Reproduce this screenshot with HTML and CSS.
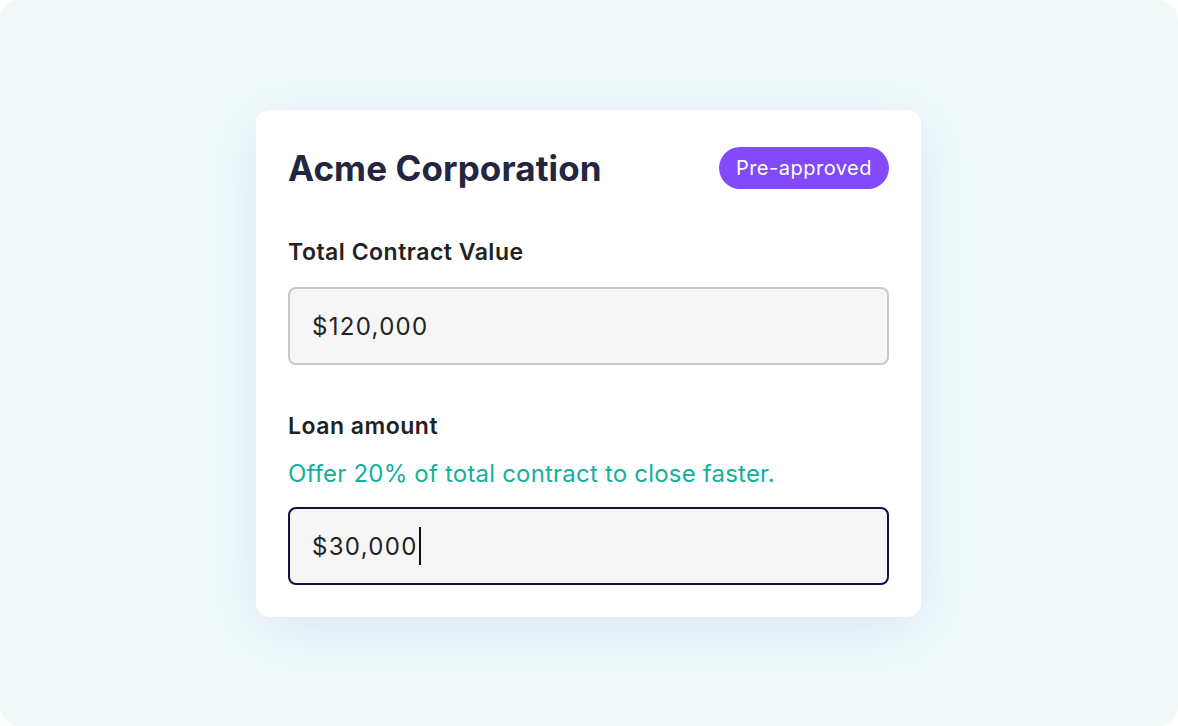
FILE: index.html
```html
<!DOCTYPE html>
<html>
<head>
  <meta charset="UTF-8">
  <title>Loan offer</title>
  <link rel="stylesheet" href="styles.css">
</head>
<body>
  <div class="stage">
    <div class="card">
      <div class="card-header">
        <div class="company">Acme Corporation</div>
        <span class="badge">Pre-approved</span>
      </div>
      <div class="field">
        <label class="field-label">Total Contract Value</label>
        <div class="input">$120,000</div>
      </div>
      <div class="field loan">
        <label class="field-label">Loan amount</label>
        <div class="hint">Offer 20% of total contract to close faster.</div>
        <div class="input focused">$30,000<span class="caret"></span></div>
      </div>
    </div>
  </div>
</body>
</html>
```

FILE: styles.css
```css
body {
  margin: 0;
  background: #fff;
  font-family: Inter, "Noto Sans", sans-serif;
}
.stage {
  width: 1178px;
  height: 726px;
  background: #f1faf9;
  border-radius: 20px;
  display: flex;
  align-items: flex-start;
  padding: 110px 0 0 256px;
  box-sizing: border-box;
}
.card {
  width: 665px;
  box-sizing: border-box;
  background: #fff;
  border-radius: 14px;
  padding: 32px;
  box-shadow: 0 12px 60px rgba(115, 120, 240, 0.16);
}
.card-header {
  display: flex;
  align-items: center;
  justify-content: space-between;
  height: 52px;
}
.company {
  font-size: 35px;
  font-weight: 700;
  color: #23263f;
  letter-spacing: 0.1px;
}
.badge {
  background: #8349fd;
  color: #fff;
  font-size: 20px;
  letter-spacing: 0.5px;
  height: 42px;
  line-height: 42px;
  padding: 0 17px;
  border-radius: 21px;
}
.field {
  margin-top: 44px;
}
.field.loan {
  margin-top: 47px;
}
.field-label {
  display: block;
  font-size: 23px;
  font-weight: 600;
  color: #222;
  line-height: 28px;
  letter-spacing: 0.5px;
}
.hint {
  margin-top: 19px;
  font-size: 24px;
  line-height: 30px;
  letter-spacing: 0.2px;
  color: #13b09b;
}
.input {
  margin-top: 21px;
  height: 78px;
  box-sizing: border-box;
  background: #f6f6f6;
  border: 2px solid #c9c9c9;
  border-radius: 8px;
  padding: 0 22px;
  display: flex;
  align-items: center;
  font-size: 24px;
  letter-spacing: 1.3px;
  color: #222;
}
.loan .input {
  margin-top: 18px;
}
.input.focused {
  border-color: #1d0a4d;
}
.caret {
  display: inline-block;
  width: 2px;
  height: 38px;
  background: #111;
  margin-left: 1px;
}
```
